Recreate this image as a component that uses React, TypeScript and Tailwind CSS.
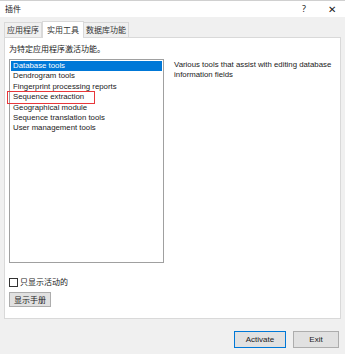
import React from 'react';

const tools = [
  'Database tools',
  'Dendrogram tools',
  'Fingerprint processing reports',
  'Sequence extraction',
  'Geographical module',
  'Sequence translation tools',
  'User management tools',
];

const font = { fontFamily: '"Liberation Sans", "Noto Sans CJK SC", sans-serif' };

export default function App() {
  return (
    <div className="w-[345px] h-[354px] bg-[#f0f0f0] flex flex-col text-[#1a1a1a] overflow-hidden font-['Noto_Sans','Noto_Sans_CJK_SC',sans-serif]">
      {/* title bar */}
      <div className="h-[17px] bg-white border-t border-[#d0d0d0] flex items-center pl-[5px] pr-[8px] text-[8px]">
        <span className="flex-1 font-['Noto_Sans_CJK_SC',sans-serif]">插件</span>
        <span className="w-[10px] text-center mr-[18px] text-[9px]">?</span>
        <span className="w-[10px] text-center text-[10px] font-light">✕</span>
      </div>

      {/* tabs */}
      <div className="flex items-end pl-[4px] pt-[4px] text-[8px] text-[#333] font-['Noto_Sans_CJK_SC',sans-serif]">
        <div className="h-[15px] px-[2px] flex items-center border border-b-0 border-[#d9d9d9] bg-[#f0f0f0]">应用程序</div>
        <div className="h-[17px] px-[4px] flex items-center bg-white border border-b-0 border-[#d9d9d9] -mb-px relative z-10">实用工具</div>
        <div className="h-[15px] px-[2px] flex items-center border border-b-0 border-l-0 border-[#d9d9d9] bg-[#f0f0f0]">数据库功能</div>
      </div>

      {/* panel */}
      <div className="mx-[4px] h-[282px] bg-white border border-[#d9d9d9] flex flex-col px-[4px] pt-[6px]">
        <div className="text-[8px] leading-[10px] font-['Noto_Sans_CJK_SC',sans-serif]">为特定应用程序激活功能。</div>
        <div className="flex mt-[5px] gap-[10px]">
          <div className="relative w-[157px] h-[204px] border border-[#a0a0a0] p-[1px] text-[7.8px] leading-[10.4px]" style={font}>
            {tools.map((t, i) => (
              <div
                key={t}
                className={i === 0 ? 'bg-[#0078d7] text-white pl-[2px]' : 'pl-[2px]'}
              >
                {t}
              </div>
            ))}
            <div className="absolute left-[-3px] top-[31px] w-[88px] h-[13px] border border-[#e8373a]" />
          </div>
          <div className="w-[164px] pt-[1px] text-[7.8px] leading-[10px]" style={font}>
            Various tools that assist with editing database information fields
          </div>
        </div>
        <label className="flex items-center gap-[2px] mt-[14px] h-[10px] text-[8px] leading-[10px] font-['Noto_Sans_CJK_SC',sans-serif]">
          <span className="w-[9px] h-[9px] border border-[#333] bg-white" />
          只显示活动的
        </label>
        <div className="mt-[5px] flex">
          <button className="h-[15px] px-[4px] bg-[#e1e1e1] border border-[#adadad] text-[8px] leading-none font-['Noto_Sans_CJK_SC',sans-serif]">显示手册</button>
        </div>
      </div>

      {/* footer */}
      <div className="flex justify-end gap-[7px] pr-[6px] mt-[12px]">
        <button className="w-[52px] h-[17px] bg-[#e1e1e1] border border-[#0078d7] text-[8px]" style={font}>Activate</button>
        <button className="w-[46px] h-[17px] bg-[#e1e1e1] border border-[#adadad] text-[8px]" style={font}>Exit</button>
      </div>
    </div>
  );
}
